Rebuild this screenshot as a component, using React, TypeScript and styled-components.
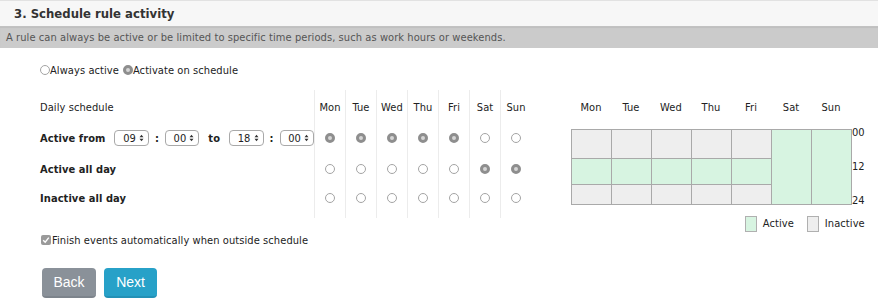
import styled, { createGlobalStyle } from "styled-components";

const GlobalStyle = createGlobalStyle`
    body {
        margin: 0;
        background: #fff;
        font-family: "DejaVu Sans Condensed", "DejaVu Sans", Verdana, sans-serif;
        font-size: 11px;
        letter-spacing: 0.08px;
        color: #222;
    }
`;

const DAYS = ["Mon", "Tue", "Wed", "Thu", "Fri", "Sat", "Sun"];

const Header = styled.div`
    height: 25px;
    border-top: 1px solid #e2e2e2;
    border-bottom: 1px solid #c2c2c2;
    background: #f7f7f7;
    display: flex;
    align-items: center;
    padding-left: 14px;
    font-size: 13px;
    font-weight: bold;
    letter-spacing: 0;
    color: #333;
`;

const SubBar = styled.div`
    height: 21px;
    background: #cbcbcb;
    box-shadow: inset 0 1px 1px rgba(0, 0, 0, 0.06);
    display: flex;
    align-items: center;
    padding-left: 6px;
    color: #555;
`;

const Body = styled.div`
    padding-left: 40px;
`;

const ChoiceRow = styled.div`
    display: flex;
    align-items: center;
    height: 12px;
    margin-top: 16px;
`;

const Option = styled.label`
    display: inline-flex;
    align-items: center;
    margin-right: 4px;
`;

const Radio = styled.span<{ $checked?: boolean }>`
    display: inline-block;
    box-sizing: border-box;
    width: 10px;
    height: 10px;
    border-radius: 50%;
    border: ${(p) => (p.$checked ? "3px solid #8e8e8e" : "1px solid #a4a4a4")};
    background: ${(p) => (p.$checked ? "#d6d6d6" : "#fff")};
`;

const Schedule = styled.div`
    display: flex;
    margin-top: 14px;
`;

const DayTable = styled.div`
    display: grid;
    grid-template-columns: 274px repeat(7, 31px);
    grid-template-rows: 34px 28px 34px 24px 8px;
    align-items: center;
`;

const RowLabel = styled.div<{ $bold?: boolean }>`
    font-weight: ${(p) => (p.$bold ? "bold" : "normal")};
    display: flex;
    align-items: center;
    height: 100%;
    white-space: nowrap;
`;

const DayCell = styled.div`
    height: 100%;
    border-left: 1px solid #ececec;
    display: flex;
    align-items: center;
    justify-content: center;
`;

const TimeLabel = styled.span`
    font-weight: bold;
    margin-right: 9px;
`;

const SelectBox = styled.span`
    box-sizing: border-box;
    width: 35px;
    height: 16px;
    border: 1px solid #a9a9a9;
    border-radius: 4px;
    display: inline-flex;
    align-items: center;
    justify-content: flex-end;
    padding-right: 4px;
    gap: 3px;
    background: #fff;
`;

const Sep = styled.span<{ $gap: number }>`
    font-weight: bold;
    margin: 0 ${(p) => p.$gap}px;
`;

const Right = styled.div`
    margin-left: 40px;
    display: flex;
    flex-direction: column;
`;

const WeekHead = styled.div`
    display: grid;
    grid-template-columns: repeat(7, 40px);
    height: 34px;
    align-items: center;
    margin-bottom: 5px;
    span {
        text-align: center;
    }
`;

const GridWrap = styled.div`
    display: flex;
`;

const WeekGrid = styled.div`
    display: grid;
    grid-template-columns: repeat(7, 39px);
    grid-template-rows: 28px 25px 19px;
    gap: 1px;
    padding: 1px;
    background: #a9a9a9;
`;

const Slot = styled.div<{ $active?: boolean; $full?: boolean }>`
    background: ${(p) => (p.$active ? "#d7f4e1" : "#eeeeee")};
    grid-row: ${(p) => (p.$full ? "1 / span 3" : "auto")};
`;

const Hours = styled.div`
    display: flex;
    flex-direction: column;
    justify-content: space-between;
    margin: -2px 0 -2px 0;
    line-height: 12px;
`;

const Legend = styled.div`
    display: flex;
    justify-content: flex-end;
    align-items: center;
    margin-top: 10px;
    height: 17px;
`;

const Swatch = styled.span<{ $active?: boolean }>`
    box-sizing: border-box;
    width: 12px;
    height: 16px;
    border: 1px solid #b0b0b0;
    background: ${(p) => (p.$active ? "#d7f4e1" : "#eeeeee")};
    margin: 0 6px 0 13px;
`;

const CheckRow = styled.div`
    display: flex;
    align-items: center;
    height: 12px;
    margin-top: 2px;
`;

const Check = styled.span`
    width: 10px;
    height: 10px;
    border-radius: 2px;
    background: #9a9a9a;
    display: inline-flex;
    align-items: center;
    justify-content: center;
    margin: 0 1px;
`;

const Buttons = styled.div`
    display: flex;
    gap: 8px;
    margin-top: 22px;
    margin-left: 2px;
`;

const Button = styled.button<{ $primary?: boolean }>`
    height: 30px;
    padding: 0 ${(p) => (p.$primary ? 12 : 11.5)}px;
    border: none;
    border-radius: 4px;
    border-bottom: 2px solid ${(p) => (p.$primary ? "#2391b6" : "#7d848c")};
    background: ${(p) => (p.$primary ? "#27a1c8" : "#8a9199")};
    color: #fff;
    font-family: "Liberation Sans", Arial, sans-serif;
    font-size: 14px;
`;

function Arrows() {
	return (
		<svg width="5" height="8" viewBox="0 0 5 8">
			<path d="M0.5 3.2 L2.5 0.8 L4.5 3.2 Z M0.5 4.8 L2.5 7.2 L4.5 4.8 Z" fill="#333" />
		</svg>
	);
}

function Select({ value }: { value: string }) {
	return (
		<SelectBox>
			{value}
			<Arrows />
		</SelectBox>
	);
}

const fromRow = [true, true, true, true, true, false, false];
const allDayRow = [false, false, false, false, false, true, true];
const none = [false, false, false, false, false, false, false];

export default function App() {
	return (
		<>
			<GlobalStyle />
			<Header>3. Schedule rule activity</Header>
			<SubBar>A rule can always be active or be limited to specific time periods, such as work hours or weekends.</SubBar>
			<Body>
				<ChoiceRow>
					<Option>
						<Radio />
						Always active
					</Option>
					<Option>
						<Radio $checked />
						Activate on schedule
					</Option>
				</ChoiceRow>
				<Schedule>
					<DayTable>
						<RowLabel>Daily schedule</RowLabel>
						{DAYS.map((d) => (
							<DayCell key={d}>{d}</DayCell>
						))}
						<RowLabel>
							<TimeLabel>Active from</TimeLabel>
							<Select value="09" />
							<Sep $gap={6}>:</Sep>
							<Select value="00" />
							<Sep $gap={9}>to</Sep>
							<Select value="18" />
							<Sep $gap={6}>:</Sep>
							<Select value="00" />
						</RowLabel>
						{fromRow.map((c, i) => (
							<DayCell key={i}>
								<Radio $checked={c} />
							</DayCell>
						))}
						<RowLabel $bold>Active all day</RowLabel>
						{allDayRow.map((c, i) => (
							<DayCell key={i}>
								<Radio $checked={c} />
							</DayCell>
						))}
						<RowLabel $bold>Inactive all day</RowLabel>
						{none.map((c, i) => (
							<DayCell key={i}>
								<Radio $checked={c} />
							</DayCell>
						))}
						<div />
						{DAYS.map((d) => (
							<DayCell key={d} />
						))}
					</DayTable>
					<Right>
						<WeekHead>
							{DAYS.map((d) => (
								<span key={d}>{d}</span>
							))}
						</WeekHead>
						<GridWrap>
							<WeekGrid>
								{DAYS.slice(0, 5).map((d, i) => (
									<Slot key={d} style={{ gridColumn: i + 1, gridRow: 1 }} />
								))}
								{DAYS.slice(0, 5).map((d, i) => (
									<Slot key={d} $active style={{ gridColumn: i + 1, gridRow: 2 }} />
								))}
								{DAYS.slice(0, 5).map((d, i) => (
									<Slot key={d} style={{ gridColumn: i + 1, gridRow: 3 }} />
								))}
								<Slot $active $full style={{ gridColumn: 6 }} />
								<Slot $active $full style={{ gridColumn: 7 }} />
							</WeekGrid>
							<Hours>
								<span>00</span>
								<span>12</span>
								<span>24</span>
							</Hours>
						</GridWrap>
						<Legend>
							<Swatch $active />
							Active
							<Swatch />
							Inactive
						</Legend>
					</Right>
				</Schedule>
				<CheckRow>
					<Check>
						<svg width="8" height="8" viewBox="0 0 8 8">
							<path d="M1.2 4.2 L3.2 6.2 L6.8 1.6" stroke="#fff" strokeWidth="1.4" fill="none" />
						</svg>
					</Check>
					Finish events automatically when outside schedule
				</CheckRow>
				<Buttons>
					<Button>Back</Button>
					<Button $primary>Next</Button>
				</Buttons>
			</Body>
		</>
	);
}
